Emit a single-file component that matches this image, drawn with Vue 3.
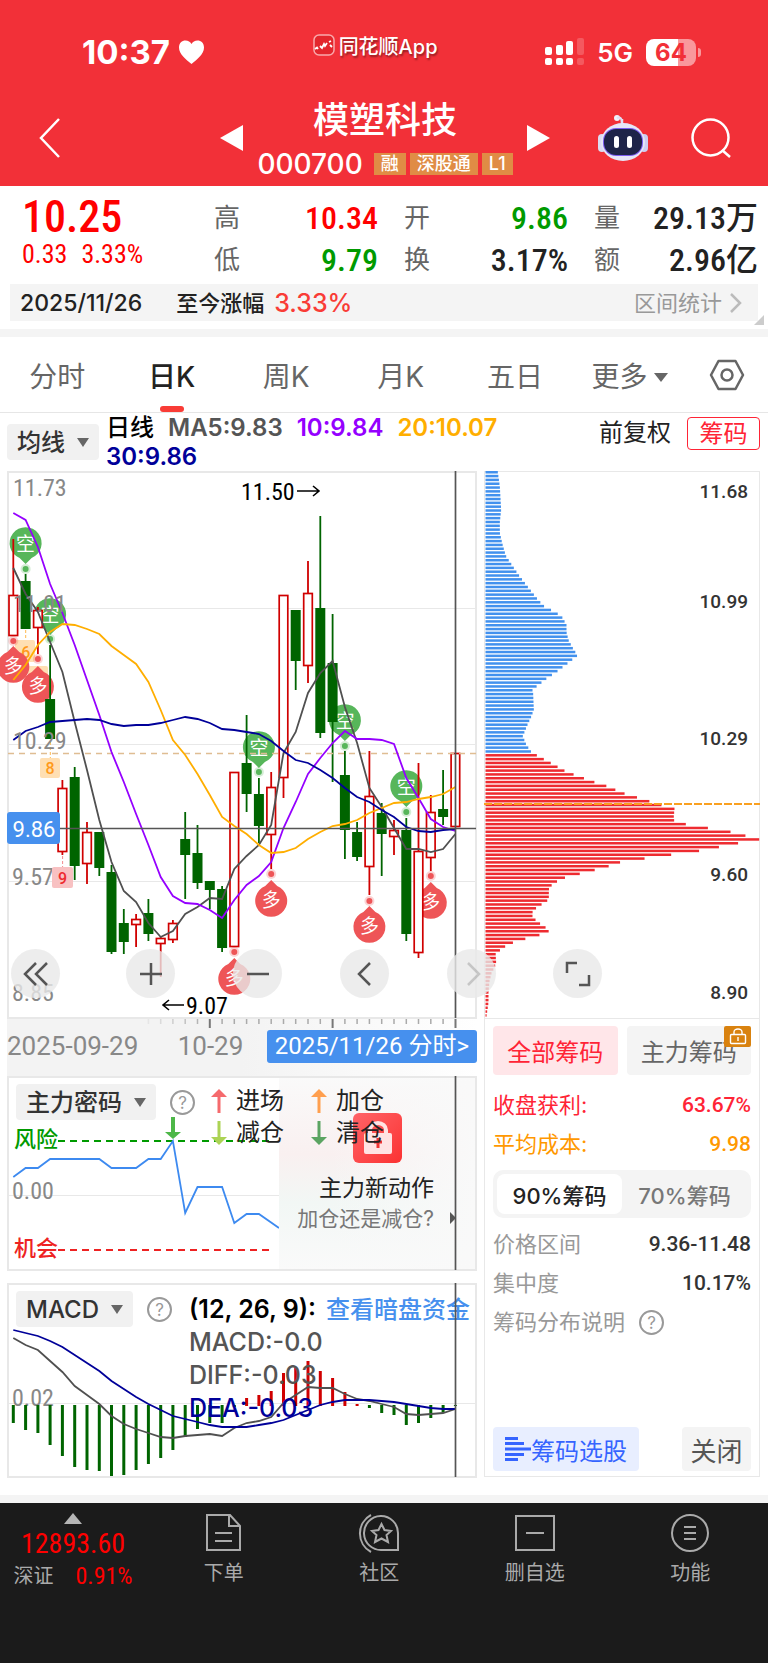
<template>
    <div class="page">
        <header class="header">
            <div class="status">
                <div class="status-time">
                    <span>10:37</span>
                    <svg width="27" height="26" viewBox="0 0 27 26"><path d="M13.500 25C8 20.500 1 15 1 8.500C1 4 4 1.500 7.500 1.500C10.200 1.500 12.300 3 13.500 5C14.700 3 16.800 1.500 19.500 1.500C23 1.500 26 4 26 8.500C26 15 19 20.500 13.500 25Z" fill="#fff" /></svg>
                </div>
                <div class="status-app">
                    <svg width="22" height="22" viewBox="0 0 22 22">
                        <rect x="1" y="1" width="20" height="20" rx="5" fill="#e3262d" stroke="#f9a9ac" stroke-width="1.500" />
                        <path d="M2 15l2-1.500 1 1.500M7 12l2 2 2-4 1 2 2-3M16 8l2-1M17 11l2 2" fill="none" stroke="#fff" stroke-width="1.800" />
                    </svg>
                    <span>同花顺App</span>
                </div>
                <div class="status-net">
                    <svg width="39" height="28" viewBox="0 0 39 28" fill="#fff">
                        <rect x="0" y="9" width="7" height="8" rx="2" />
                        <rect x="11" y="7" width="7" height="10" rx="2" />
                        <rect x="21" y="3" width="7" height="14" rx="2" />
                        <rect x="32" y="0" width="7" height="17" rx="2" opacity=".2" />
                        <rect x="0" y="20" width="7" height="7" rx="2" />
                        <rect x="11" y="20" width="7" height="7" rx="2" />
                        <rect x="21" y="20" width="7" height="7" rx="2" />
                        <rect x="32" y="20" width="7" height="7" rx="2" opacity=".2" />
                    </svg>
                    <span class="net-type">5G</span>
                    <span class="battery"><span>64</span></span>
                </div>
            </div>
            <div class="nav">
                <button type="button" class="icon-btn" aria-label="Back">
                    <svg width="22" height="40" viewBox="0 0 22 40"><path d="M20 1L2 20L20 39" fill="none" stroke="#fff" stroke-width="2.500" /></svg>
                </button>
                <div class="stock">
                    <button type="button" class="icon-btn" aria-label="Previous">
                        <svg width="24" height="26" viewBox="0 0 24 26"><path d="M0 13L23 0V26Z" fill="#fff" /></svg>
                    </button>
                    <div class="stock-title">
                        <h1>模塑科技</h1>
                        <div class="stock-code">
                            <span>000700</span>
                            <em v-for="tag in tags" :key="tag">{{ tag }}</em>
                        </div>
                    </div>
                    <button type="button" class="icon-btn" aria-label="Next">
                        <svg width="24" height="26" viewBox="0 0 24 26"><path d="M24 13L1 0V26Z" fill="#fff" /></svg>
                    </button>
                </div>
                <div class="nav-right">
                    <button type="button" class="icon-btn" aria-label="Assistant">
                        <svg width="50" height="46" viewBox="0 0 50 46">
                            <path d="M24 9V4" stroke="#dfe0f5" stroke-width="2.500" />
                            <circle cx="19" cy="3" r="3" fill="#f1f1fb" />
                            <path d="M19 3Q24 1 24 8" fill="none" stroke="#dfe0f5" stroke-width="2" />
                            <rect x="0" y="19" width="8" height="18" rx="4" fill="#dcdcf2" />
                            <rect x="42" y="19" width="8" height="18" rx="4" fill="#cdcdf0" />
                            <ellipse cx="25" cy="27" rx="22" ry="19" fill="#e6e6f7" />
                            <rect x="5" y="13" width="40" height="28" rx="13" fill="#7b5cf0" />
                            <rect x="6" y="14" width="38" height="26" rx="12" fill="#1e2448" />
                            <rect x="16" y="21" width="5" height="12" rx="2.500" fill="#fff" />
                            <rect x="29" y="21" width="5" height="12" rx="2.500" fill="#fff" />
                        </svg>
                    </button>
                    <button type="button" class="icon-btn" aria-label="Search">
                        <svg width="40" height="40" viewBox="0 0 40 40" fill="none" stroke="#fff" stroke-width="2.500">
                            <circle cx="19.500" cy="19.500" r="18" />
                            <path d="M31 32L39 39" />
                        </svg>
                    </button>
                </div>
            </div>
        </header>

        <section class="quote">
            <div class="price">
                <strong>10.25</strong>
                <p><span>0.33</span><span>3.33%</span></p>
            </div>
            <dl class="stats">
                <div v-for="item in stats" :key="item.label">
                    <dt>{{ item.label }}</dt>
                    <dd :class="item.tone">{{ item.value }}</dd>
                </div>
            </dl>
        </section>

        <div class="range">
            <span class="range-date">2025/11/26</span>
            <span class="range-label">至今涨幅</span>
            <b>3.33%</b>
            <a href="#" class="range-link">区间统计
                <svg width="12" height="20" viewBox="0 0 12 20"><path d="M1 1L10 10L1 19" fill="none" stroke="#bbb" stroke-width="2.500" /></svg>
            </a>
        </div>

        <nav class="tabs">
            <button
                v-for="tab in tabs"
                :key="tab"
                type="button"
                class="tab"
                :class="{ active: tab === activeTab, more: tab === '更多' }"
                @click="activeTab = tab"
            >{{ tab }}</button>
            <button type="button" class="tab-set" aria-label="Settings">
                <svg width="36" height="32" viewBox="0 0 36 32" fill="none" stroke="#666" stroke-width="2.500">
                    <path d="M9.500 2H26.500L34 16L26.500 30H9.500L2 16Z" stroke-linejoin="round" />
                    <circle cx="18" cy="16" r="5.500" />
                </svg>
            </button>
        </nav>

        <div class="ma-row">
            <label class="picker">
                <select aria-label="Indicator"><option>均线</option></select>
            </label>
            <div class="ma-list">
                <span v-for="ma in maLabels" :key="ma.text" :class="ma.name">{{ ma.text }}</span>
            </div>
            <span class="adjust">前复权</span>
            <button type="button" class="chip-toggle">筹码</button>
        </div>

        <main class="board">
            <div class="left">
                <div class="kline">
                    <svg viewBox="7 471 470 547" class="plot">
                        <rect x="8" y="472" width="468" height="546" class="frame" />
                        <path d="M8 608.500H476M8 744.500H476M8 881.500H476" class="grid-line" />
                        <!-- counting badges under the candles -->
                        <rect x="15" y="640" width="20" height="22" rx="2" class="badge-o" />
                        <path d="M25.700 630V640M50.300 742V758" stroke="#ffb84d" stroke-dasharray="3 2" />
                        <text x="25.700" y="658" class="badge-text orange">6</text>
                        <rect x="28" y="666" width="20" height="20" rx="2" class="badge-o" />
                        <rect x="40" y="758" width="20" height="20" rx="2" class="badge-o" />
                        <text x="50" y="774" class="badge-text orange">8</text>
                        <g v-for="(pin, i) in pins" :key="'pin' + i">
                            <circle :cx="xAt(pin.i)" :cy="pin.dot" r="5" :fill="pin.up ? '#ee5557' : '#57b65a'" opacity=".25" />
                            <circle :cx="xAt(pin.i)" :cy="pin.dot" r="3" :fill="pin.up ? '#ee5557' : '#57b65a'" />
                            <path :d="pinPath(pin)" :fill="pin.up ? '#ee5557' : '#57b65a'" />
                            <text :x="xAt(pin.i)" :y="pin.y + 7" class="pin-text">{{ pin.up ? '多' : '空' }}</text>
                        </g>
                        <g v-for="(c, i) in candles" :key="'c' + i">
                            <path :d="`M${xAt(i)} ${c[1]}V${c[2]}M${xAt(i)} ${c[3]}V${c[4]}`" :stroke="c[0] ? '#d00000' : '#006400'" stroke-width="1.800" />
                            <rect v-if="c[0]" :x="xAt(i) - 4.300" :y="c[2] + 0.500" width="8.600" :height="c[3] - c[2] - 1" fill="#fff" stroke="#d00000" stroke-width="1.700" />
                            <rect v-else :x="xAt(i) - 5" :y="c[2]" width="10" :height="c[3] - c[2]" fill="#006400" />
                        </g>
                        <path d="M8 753.500H476" stroke="#dfbd92" stroke-width="1.300" stroke-dasharray="6 5" />
                        <polyline :points="line(ma5)" class="curve c-gray" />
                        <polyline :points="line(ma10)" class="curve c-purple" />
                        <polyline :points="line(ma20)" class="curve c-orange" />
                        <polyline :points="line(ma30)" class="curve c-navy" />
                        <g class="axis-text">
                            <text x="13" y="496">11.73</text>
                            <text x="13" y="612">11.01</text>
                            <text x="13" y="749">10.29</text>
                            <text x="12" y="885">9.57</text>
                            <text x="12" y="1001">8.85</text>
                        </g>
                        <rect x="52" y="867" width="21" height="21" rx="2" fill="#f8c1c2" />
                        <path d="M62.600 856V867" stroke="#f28b8d" stroke-dasharray="3 2" />
                        <text x="62.500" y="884" class="badge-text red">9</text>
                        <g class="note">
                            <text x="241" y="500">11.50</text>
                            <text x="186" y="1014">9.07</text>
                            <path d="M297 491H319M313 486L319 491L313 496M184 1005H163M169 1000L163 1005L169 1010" />
                        </g>
                        <path d="M8 828.500H476M455.500 471V1018" class="cross" />
                        <rect x="7" y="812" width="53" height="32" rx="3" fill="#4690ee" />
                        <text x="34" y="837" class="now">9.86</text>
                    </svg>
                    <div class="tools">
                        <button v-for="tool in tools" :key="tool.name" type="button" class="tool" :aria-label="tool.name">
                            <svg width="26" height="26" viewBox="0 0 26 26" :class="{ faded: tool.name === 'Forward' }"><path :d="tool.path" /></svg>
                        </button>
                    </div>
                </div>

                <div class="dates">
                    <svg viewBox="7 1018 470 10" class="plot ticks">
                        <path v-for="n in 25" :key="n" :d="`M${xAt(n + 10)} 1018v${n === 6 || n === 16 ? 10 : 6}`" :opacity="Math.min(1, n / 6)" :class="{ major: n === 6 || n === 16 }" />
                        <path d="M455.500 1018v10" class="major" />
                    </svg>
                    <div class="date-row">
                        <span>2025-09-29</span>
                        <span>10-29</span>
                        <button type="button" class="date-btn">2025/11/26 分时&gt;</button>
                    </div>
                </div>

                <section class="panel">
                    <svg viewBox="7 1076 470 194" class="plot">
                        <defs>
                            <linearGradient id="veil" x1="0" y1="0" x2="0" y2="1">
                                <stop offset="0" stop-color="#fafafa" />
                                <stop offset=".4" stop-color="#f9f0f0" />
                                <stop offset=".65" stop-color="#f2f7f5" />
                                <stop offset="1" stop-color="#fafafa" />
                            </linearGradient>
                            <linearGradient id="veil-side" x1="0" y1="0" x2="1" y2="0">
                                <stop offset="0" stop-color="#f9f9f9" stop-opacity="0" />
                                <stop offset="1" stop-color="#f9f9f9" />
                            </linearGradient>
                            <linearGradient id="lock-bg" x1="0" y1="0" x2="1" y2="1">
                                <stop offset="0" stop-color="#ff6468" />
                                <stop offset="1" stop-color="#fb3232" />
                            </linearGradient>
                        </defs>
                        <path d="M8 1195.500H279" class="grid-line" />
                        <path d="M58 1141H273" stroke="#009a00" stroke-width="2" stroke-dasharray="7 5" />
                        <path d="M58 1250H273" stroke="#ee2222" stroke-width="2" stroke-dasharray="7 5" />
                        <text x="14" y="1147" class="mark green">风险</text>
                        <text x="14" y="1256" class="mark red">机会</text>
                        <text x="12" y="1199" class="axis-text">0.00</text>
                        <polyline :points="line(force) + ' 279,1228'" class="curve" stroke="#3d8af0" />
                        <path d="M173 1117V1134" stroke="#4db748" stroke-width="4" />
                        <path d="M165 1132H181L173 1139Z" fill="#4db748" />
                        <rect x="279" y="1077" width="197" height="193" fill="url(#veil)" />
                        <rect x="330" y="1077" width="146" height="193" fill="url(#veil-side)" />
                        <rect x="353" y="1113" width="49" height="50" rx="6" fill="url(#lock-bg)" />
                        <rect x="364" y="1133" width="28" height="21" rx="2" fill="#ffe3e3" />
                        <path d="M370 1133V1130A8 7 0 0 1 386 1130V1133" fill="none" stroke="#ffe3e3" stroke-width="4" />
                        <path d="M378 1138V1148M374 1142H382" stroke="#e33" stroke-width="3" />
                        <path d="M450 1212L456 1218L450 1224Z" fill="#555" />
                        <rect x="8" y="1077" width="468" height="193" class="frame" />
                        <path d="M455.500 1076V1270" class="cross" />
                    </svg>
                    <div class="panel-head">
                        <label class="picker"><select aria-label="Sub chart"><option>主力密码</option></select></label>
                        <button type="button" class="help">?</button>
                        <ul class="legend">
                            <li v-for="item in legend" :key="item.text">
                                <svg width="16" height="24" viewBox="0 0 16 24" :fill="item.color">
                                    <path v-if="item.up" d="M8 0L16 8H9.500V24H6.500V8H0Z" />
                                    <path v-else d="M8 24L16 16H9.500V0H6.500V16H0Z" />
                                </svg>
                                {{ item.text }}
                            </li>
                        </ul>
                    </div>
                    <a href="#" class="promo">
                        <b>主力新动作</b>
                        <span>加仓还是减仓?</span>
                    </a>
                </section>

                <section class="panel macd">
                    <svg viewBox="7 1283 470 194" class="plot">
                        <path d="M8 1403.500H476" class="grid-line" />
                        <text x="12" y="1406" class="axis-text">0.02</text>
                        <path v-for="(y, i) in macdBars" :key="i" :d="`M${xAt(i)} ${y < 1405 ? 1406 : 1405}V${y}`" :stroke="y < 1405 ? '#d00000' : '#006400'" stroke-width="3" />
                        <polyline :points="line(diff)" class="curve c-gray" />
                        <polyline :points="line(dea)" class="curve c-navy" />
                        <rect x="8" y="1284" width="468" height="193" class="frame" />
                    </svg>
                    <div class="panel-head">
                        <label class="picker"><select aria-label="Sub chart"><option>MACD</option></select></label>
                        <button type="button" class="help">?</button>
                        <div class="macd-values">
                            <p><b>(12, 26, 9):</b><a href="#">查看暗盘资金</a></p>
                            <p>MACD:-0.0</p>
                            <p>DIFF:-0.03</p>
                            <p class="navy">DEA:-0.03</p>
                        </div>
                    </div>
                    <svg viewBox="7 1283 470 194" class="plot over"><path d="M455.500 1283V1477" class="cross" /></svg>
                </section>
            </div>

            <aside class="right">
                <div class="profile">
                    <svg viewBox="484 471 276 547" class="plot">
                        <rect x="484.500" y="471.500" width="275" height="547" class="frame thin" />
                        <rect v-for="(bar, i) in chipBars" :key="i" x="485.500" :y="bar.y" :width="bar.width" height="2.500" :fill="bar.y < 753 ? '#4291ee' : '#ee2b30'" />
                        <path d="M484 804H760" stroke="#f9a021" stroke-width="2" stroke-dasharray="8 2" />
                        <g class="chip-text">
                            <text x="748" y="498">11.68</text>
                            <text x="748" y="608">10.99</text>
                            <text x="748" y="745">10.29</text>
                            <text x="748" y="881">9.60</text>
                            <text x="748" y="999">8.90</text>
                        </g>
                    </svg>
                </div>
                <div class="chip-info">
                    <div class="chip-tabs">
                        <button type="button" class="on">全部筹码</button>
                        <button type="button">主力筹码
                            <svg class="lock" width="27" height="21" viewBox="0 0 27 21">
                                <rect width="27" height="21" rx="2" fill="#d9820f" />
                                <g fill="none" stroke="#fff" stroke-width="1.400"><rect x="6.500" y="8.500" width="15" height="9" rx="1" /><path d="M10 8V6A4 3 0 0 1 18 6V8M14 11V15" /></g>
                            </svg>
                        </button>
                    </div>
                    <p class="row red"><span>收盘获利:</span><b>63.67%</b></p>
                    <p class="row amber"><span>平均成本:</span><b>9.98</b></p>
                    <div class="segment">
                        <button v-for="p in ['90%', '70%']" :key="p" type="button" :class="{ on: p === percent }" @click="percent = p">{{ p }}筹码</button>
                    </div>
                    <p class="row gray"><span>价格区间</span><b>9.36-11.48</b></p>
                    <p class="row gray"><span>集中度</span><b>10.17%</b></p>
                    <p class="row gray explain"><span>筹码分布说明</span><button type="button" class="help">?</button></p>
                    <div class="chip-actions">
                        <button type="button" class="pick">
                            <svg width="26" height="24" viewBox="0 0 26 24"><path d="M0 1.500H13M0 6.500H19M0 12H26M0 17.500H19M0 22.500H13" stroke="#3564ff" stroke-width="3" /></svg>筹码选股
                        </button>
                        <button type="button" class="close">关闭</button>
                    </div>
                </div>
                <button type="button" class="tool expand" aria-label="Full screen">
                    <svg width="26" height="26" viewBox="0 0 26 26"><path d="M2 12V2H12M24 14V24H14" /></svg>
                </button>
            </aside>
        </main>

        <footer class="footer">
            <div class="index">
                <svg width="18" height="11" viewBox="0 0 18 11"><path d="M9 0L18 11H0Z" fill="#b5b5b5" /></svg>
                <strong>12893.60</strong>
                <p><span>深证</span><b>0.91%</b></p>
            </div>
            <a v-for="item in menu" :key="item.text" href="#" class="menu-item">
                <svg width="42" height="40" viewBox="0 0 42 40"><path :d="item.path" /></svg>
                <span>{{ item.text }}</span>
            </a>
        </footer>
    </div>
</template>

<script setup>
import { ref } from 'vue';

    const activeTab = ref('日K')
    const percent = ref('90%')

    const tags = ['融', '深股通', 'L1']
    const tabs = ['分时', '日K', '周K', '月K', '五日', '更多']

    const stats = [
        { label: '高', value: '10.34', tone: 'up' },
        { label: '开', value: '9.86', tone: 'down' },
        { label: '量', value: '29.13万' },
        { label: '低', value: '9.79', tone: 'down' },
        { label: '换', value: '3.17%' },
        { label: '额', value: '2.96亿' }
    ]

    const maLabels = [
        { text: '日线', name: 'black' },
        { text: 'MA5:9.83', name: 'dim' },
        { text: '10:9.84', name: 'purple' },
        { text: '20:10.07', name: 'orange' },
        { text: '30:9.86', name: 'navy' }
    ]

    // [rising, high, body top, body bottom, low]
    const candles = [
        [1, 539, 595, 636, 636], [0, 574, 581, 629, 629], [1, 607, 610, 628, 654], [0, 645, 699, 739, 739],
        [1, 780, 788, 852, 855], [0, 767, 777, 866, 880], [1, 822, 832, 864, 884], [0, 832, 832, 868, 876],
        [0, 865, 872, 952, 954], [0, 909, 923, 942, 954], [1, 914, 919, 925, 947], [0, 899, 913, 934, 941],
        [1, 937, 938, 944, 977], [1, 920, 923, 940, 943], [0, 812, 839, 855, 899], [0, 825, 853, 883, 889],
        [0, 881, 881, 890, 909], [0, 886, 889, 948, 952], [1, 772, 772, 947, 947], [0, 715, 763, 794, 812],
        [0, 778, 794, 826, 843], [1, 772, 787, 835, 869], [1, 595, 595, 778, 798], [0, 610, 610, 661, 690],
        [1, 561, 593, 666, 683], [0, 516, 608, 733, 738], [0, 614, 663, 722, 782], [0, 751, 775, 830, 859],
        [0, 822, 832, 857, 861], [1, 751, 796, 867, 895], [0, 803, 813, 834, 876], [1, 820, 830, 837, 855],
        [0, 818, 830, 934, 941], [1, 763, 851, 953, 958], [1, 795, 812, 858, 871], [0, 770, 809, 817, 825],
        [1, 753, 753, 827, 827]
    ]
    const ma5 = [568, 594, 612, 642, 672, 722, 770, 820, 862, 891, 902, 923, 937, 931, 914, 907, 898, 899, 869, 856, 845, 825, 753, 732, 693, 673, 661, 707, 743, 788, 807, 828, 849, 849, 852, 849, 834]
    const ma10 = [513, 520, 547, 584, 613, 645, 680, 715, 752, 782, 814, 845, 877, 896, 903, 904, 910, 918, 900, 885, 876, 862, 828, 802, 774, 758, 743, 731, 739, 739, 740, 744, 778, 798, 819, 827, 831]
    const ma20 = [680, 665, 645, 632, 624, 625, 629, 634, 646, 655, 664, 682, 710, 740, 755, 774, 795, 817, 826, 834, 845, 853, 852, 848, 839, 832, 826, 824, 820, 813, 808, 803, 802, 799, 797, 794, 787]
    const ma30 = [740, 731, 727, 722, 721, 720, 719, 720, 724, 726, 725, 725, 723, 720, 717, 719, 723, 729, 730, 732, 734, 741, 751, 760, 763, 770, 778, 788, 797, 802, 810, 817, 827, 831, 832, 830, 829]
    const force = [1177, 1168, 1168, 1159, 1159, 1159, 1159, 1159, 1168, 1168, 1168, 1159, 1159, 1141, 1213, 1187, 1187, 1187, 1223, 1214, 1214]
    const macdBars = [1423, 1430, 1433, 1445, 1456, 1467, 1470, 1471, 1476, 1475, 1470, 1464, 1458, 1450, 1437, 1429, 1423, 1423, 1407, 1398, 1395, 1391, 1373, 1368, 1361, 1371, 1378, 1392, 1404, 1408, 1413, 1415, 1425, 1423, 1418, 1412, 1406]
    const diff = [1338, 1345, 1350, 1361, 1372, 1386, 1395, 1404, 1416, 1424, 1429, 1433, 1437, 1438, 1436, 1435, 1434, 1436, 1428, 1423, 1421, 1417, 1403, 1395, 1387, 1388, 1388, 1394, 1399, 1401, 1404, 1407, 1414, 1415, 1414, 1413, 1409]
    const dea = [1330, 1333, 1336, 1341, 1347, 1355, 1363, 1371, 1381, 1389, 1397, 1404, 1410, 1416, 1419, 1422, 1425, 1427, 1427, 1427, 1425, 1423, 1420, 1415, 1410, 1405, 1402, 1400, 1400, 1400, 1401, 1402, 1404, 1406, 1408, 1409, 1409]

    const pins = [
        { i: 1, y: 544, dot: 569 }, { i: 3, y: 615, dot: 639 }, { i: 20, y: 748, dot: 772 },
        { i: 27, y: 721, dot: 746 }, { i: 32, y: 787, dot: 812 },
        { i: 0, y: 666, dot: 641, up: true }, { i: 2, y: 686, dot: 659, up: true }, { i: 18, y: 978, dot: 952, up: true },
        { i: 21, y: 900, dot: 874, up: true }, { i: 29, y: 926, dot: 901, up: true }, { i: 34, y: 902, dot: 876, up: true }
    ]

    const tools = [
        { name: 'Rewind', path: 'M13 2L2 13L13 24M24 2L13 13L24 24' },
        { name: 'Zoom in', path: 'M13 2V24M2 13H24' },
        { name: 'Zoom out', path: 'M2 13H24' },
        { name: 'Back one', path: 'M18 2L7 13L18 24' },
        { name: 'Forward', path: 'M9 2L20 13L9 24' }
    ]

    const legend = [
        { text: '进场', color: '#f56a6d', up: true },
        { text: '加仓', color: '#ff9f4f', up: true },
        { text: '减仓', color: '#acd355' },
        { text: '清仓', color: '#5ba462' }
    ]

    const menu = [
        { text: '下单', path: 'M4 2H27L37 13V37H4ZM26 2V13H37M12 20H29M12 28H29' },
        { text: '社区', path: 'M40 37H24A17 17 0 1 1 40 20ZM13 2A21 21 0 0 0 13 39M23.500 11L26.500 17L33 18L28.500 22L30 29L23.500 25.500L17 29L18.500 22L14 18L20.500 17Z' },
        { text: '删自选', path: 'M2 3H40V37H2ZM12 20H30' },
        { text: '功能', path: 'M21 2A18 18 0 1 0 21 38A18 18 0 1 0 21 2M15 14H27M15 20H27M15 26H27' }
    ]

    // key points of the chip profile: [offset down, length]
    const profile = [
        [0, 37], [40, 43], [105, 47], [140, 43], [170, 43], [202, 51], [234, 61], [265, 83], [287, 99], [320, 126],
        [352, 153], [374, 174], [395, 215], [406, 230], [427, 243], [448, 243], [470, 249], [491, 261], [513, 276],
        [534, 248], [557, 216], [578, 183], [600, 153], [610, 141], [621, 143], [665, 145], [685, 137], [707, 126],
        [739, 112], [760, 121], [781, 135], [792, 153], [813, 194], [835, 236], [846, 264], [867, 325], [878, 362],
        [899, 415], [920, 488], [931, 525], [942, 567], [974, 564], [985, 599], [996, 667], [1006, 732], [1017, 778],
        [1028, 822], [1039, 757], [1050, 698], [1060, 643], [1071, 557], [1082, 475], [1092, 405], [1103, 370],
        [1114, 327], [1135, 239], [1145, 216], [1157, 198], [1168, 190], [1190, 190], [1200, 185], [1211, 167],
        [1222, 150], [1232, 141], [1243, 141], [1253, 150], [1264, 164], [1275, 181], [1285, 190], [1297, 159],
        [1307, 118], [1318, 80], [1329, 57], [1339, 43], [1350, 30], [1370, 32], [1382, 29], [1403, 18], [1425, 12],
        [1455, 9], [1485, 9], [1523, 3], [1540, 2]
    ]
    const chipBars = []
    for (let n = 0; n < 143; n++) {
        const at = n * 10.71
        const k = profile.findIndex((p, i) => i > 0 && p[0] >= at)
        const [y0, w0] = profile[k - 1]
        const [y1, w1] = profile[k]
        const width = w0 + (w1 - w0) * (at - y0) / (y1 - y0)
        chipBars.push({ y: 471 + at / 2.8, width: width / 3 })
    }

    const xAt = (i) => Math.round((13.3 + i * 12.28) * 10) / 10
    const line = (values) => values.map((y, i) => `${xAt(i)},${y}`).join(' ')
    const pinPath = (pin) => {
        const x = xAt(pin.i)
        return pin.up
            ? `M${x} ${pin.y - 20}L${x + 6} ${pin.y - 14}A16 16 0 1 1 ${x - 6} ${pin.y - 14}Z`
            : `M${x} ${pin.y + 20}L${x - 6} ${pin.y + 14}A16 16 0 1 1 ${x + 6} ${pin.y + 14}Z`
    }
</script>

<style>
body {
  background: #fff;
}
</style>

<style scoped>
.page {
  display: flex;
  flex-direction: column;
  min-height: 100vh;
  font-family: Inter, "Noto Sans CJK SC", sans-serif;
  color: #222;
}

.page * {
  box-sizing: border-box;
}

button,
select {
  margin: 0;
  padding: 0;
  border: none;
  background: none;
  font: inherit;
  color: inherit;
  cursor: pointer;
}

a {
  color: inherit;
  text-decoration: none;
}

p,
h1,
dl,
dd,
ul {
  margin: 0;
  padding: 0;
}

svg {
  display: block;
}

.header {
  background: #f23038;
  color: #fff;
  padding-bottom: 6px;
}

.status {
  display: flex;
  align-items: center;
  justify-content: space-between;
  height: 96px;
  padding: 8px 66px 0 82px;
}

.status-time {
  display: flex;
  align-items: center;
  gap: 8px;
  font-size: 33px;
  font-weight: 700;
}

.status-app {
  display: flex;
  align-items: center;
  gap: 4px;
  margin-bottom: 14px;
  font-size: 20px;
  font-weight: 500;
  text-shadow: 1px 2px 2px rgba(0, 0, 0, 0.4);
}

.status-net {
  display: flex;
  align-items: center;
  gap: 13px;
}

.net-type {
  font-size: 26px;
  font-weight: 600;
}

.battery {
  position: relative;
  width: 50px;
  height: 27px;
  margin-right: 6px;
  border-radius: 8px;
  background: linear-gradient(90deg, #fff 64%, #f9989c 64%);
  color: #f23038;
  font-size: 24px;
  font-weight: 700;
  line-height: 27px;
  text-align: center;
}

.battery::after {
  content: "";
  position: absolute;
  right: -5px;
  top: 9px;
  width: 3px;
  height: 9px;
  border-radius: 0 4px 4px 0;
  background: #f9989c;
}

.nav {
  display: grid;
  grid-template-columns: 1fr auto 1fr;
  align-items: center;
  height: 84px;
  padding: 0 37px 0 39px;
}

.stock {
  display: flex;
  align-items: center;
  gap: 13px;
}

.stock-title {
  text-align: center;
}

.stock-title h1 {
  font-size: 36px;
  font-weight: 500;
  line-height: 44px;
}

.stock-code {
  display: flex;
  align-items: center;
  gap: 4px;
  margin-top: 8px;
  font-size: 28px;
  font-weight: 500;
  line-height: 28px;
}

.stock-code span {
  margin-right: 7px;
}

.stock-code em {
  padding: 0 7px;
  background: #e08c45;
  font-size: 18px;
  font-style: normal;
  line-height: 22px;
}

.nav-right {
  display: flex;
  align-items: center;
  justify-content: flex-end;
  gap: 43px;
}

.quote {
  display: flex;
  padding: 0 10px 0 22px;
  font-family: "Roboto Condensed", "Liberation Sans Narrow", Roboto, "Noto Sans CJK SC", sans-serif;
}

.price {
  width: 192px;
  padding-top: 8px;
  color: #f00;
}

.price strong {
  display: block;
  font-size: 44px;
  font-weight: 500;
  line-height: 46px;
}

.price p {
  display: flex;
  gap: 14px;
  font-size: 26px;
  line-height: 28px;
}

.stats {
  flex: 1;
  display: grid;
  grid-template-columns: repeat(3, 1fr);
  column-gap: 26px;
  padding: 11px 0 3px;
}

.stats div {
  display: flex;
  justify-content: space-between;
  line-height: 42px;
}

.stats dt {
  color: #666;
  font-size: 26px;
}

.stats dd {
  font-size: 32px;
  font-weight: 500;
}

.up {
  color: #f00;
}

.down {
  color: #009a00;
}

.range {
  position: relative;
  display: flex;
  align-items: center;
  height: 37px;
  margin: 0 10px 8px;
  padding: 0 16px 0 10px;
  background: #f4f4f4;
  font-size: 22px;
  font-weight: 500;
  line-height: 30px;
}

.range::after {
  content: "";
  position: absolute;
  right: -6px;
  bottom: -4px;
  border-left: 10px solid transparent;
  border-bottom: 10px solid #ccc;
}

.range-date {
  font-size: 23px;
}

.range-label {
  margin: 0 10px 0 34px;
}

.range b {
  color: #f93c36;
  font-size: 25px;
  font-weight: 500;
}

.range-link {
  display: flex;
  align-items: center;
  gap: 8px;
  margin-left: auto;
  color: #999;
  font-weight: 400;
}

.tabs {
  display: flex;
  border-top: 8px solid #f4f4f4;
  border-bottom: 1px solid #e6e6e6;
}

.tab {
  position: relative;
  flex: 114;
  height: 75px;
  color: #666;
  font-size: 28px;
}

.tab.active {
  color: #222;
  font-weight: 500;
}

.tab.active::after {
  content: "";
  position: absolute;
  left: 50%;
  bottom: 0;
  width: 24px;
  height: 6px;
  margin-left: -12px;
  border-radius: 3px;
  background: #f93c36;
}

.tab.more::after {
  content: "";
  display: inline-block;
  margin: 0 0 5px 6px;
  border: 7px solid transparent;
  border-top: 9px solid #666;
  border-bottom: none;
}

.tab-set {
  flex: 81;
  display: flex;
  align-items: center;
  justify-content: center;
}

.picker {
  position: relative;
  flex: none;
}

.picker select {
  appearance: none;
  height: 36px;
  padding: 0 34px 0 10px;
  border-radius: 4px;
  background: #f1f1f1;
  color: #333;
  font-size: 24px;
  font-weight: 500;
}

.picker::after {
  content: "";
  position: absolute;
  right: 10px;
  top: 14px;
  border: 6px solid transparent;
  border-top: 9px solid #666;
  border-bottom: none;
  pointer-events: none;
}

.ma-row {
  display: flex;
  align-items: flex-start;
  min-height: 58px;
  padding: 0 8px 0 7px;
  font-size: 24px;
}

.ma-row .picker {
  margin: 11px 7px 0 0;
}

.ma-list {
  flex: 1;
  display: flex;
  flex-wrap: wrap;
  column-gap: 14px;
  margin-right: 14px;
  font-weight: 600;
  line-height: 29px;
}

.black {
  color: #000;
  font-weight: 500;
}

.dim {
  color: #555;
}

.purple {
  color: #9500ff;
}

.orange {
  color: #ffae00;
}

.navy {
  color: #000099;
}

.adjust {
  line-height: 40px;
}

.chip-toggle {
  width: 73px;
  height: 33px;
  margin: 4px 0 0 16px;
  border: 1px solid #ff2436;
  border-radius: 4px;
  color: #ff2436;
  line-height: 30px;
}

.board {
  display: grid;
  grid-template-columns: 470fr 276fr;
  gap: 7px;
  padding: 0 8px 18px 7px;
}

.plot {
  width: 100%;
  height: auto;
  overflow: visible;
}

.frame {
  fill: none;
  stroke: #e8e8e8;
  stroke-width: 2;
}

.frame.thin {
  stroke-width: 1;
}

.grid-line {
  stroke: #e8e8e8;
}

.curve {
  fill: none;
  stroke-width: 1.8;
}

.c-gray {
  stroke: #505050;
}

.c-purple {
  stroke: #9500ff;
}

.c-orange {
  stroke: #ffae00;
}

.c-navy {
  stroke: #000099;
}

.cross {
  stroke: #555;
  stroke-width: 1.7;
}

.axis-text {
  fill: #888;
  font-family: "Roboto Condensed", "Liberation Sans Narrow", Roboto, sans-serif;
  font-size: 24px;
}

.note {
  fill: #000;
  font-family: "Roboto Condensed", "Liberation Sans Narrow", Roboto, sans-serif;
  font-size: 24px;
}

.note path {
  fill: none;
  stroke: #000;
  stroke-width: 1.6;
}

.now {
  fill: #fff;
  font-family: Roboto, sans-serif;
  font-size: 22px;
  text-anchor: middle;
}

.pin-text {
  fill: #fff;
  font-size: 19px;
  text-anchor: middle;
}

.badge-o {
  fill: #ffdfb3;
}

.badge-text {
  font-family: Roboto, sans-serif;
  font-size: 16px;
  font-weight: 500;
  text-anchor: middle;
}

.badge-text.orange {
  fill: #ff9a1a;
}

.badge-text.red {
  fill: #ee2b30;
}

.kline {
  position: relative;
}

.tools {
  position: absolute;
  left: 4px;
  bottom: 20px;
  z-index: 1;
  display: flex;
  gap: 58px;
}

.tool {
  display: flex;
  align-items: center;
  justify-content: center;
  width: 49px;
  height: 49px;
  border-radius: 50%;
  background: rgba(232, 232, 232, 0.8);
}

.tools .tool:first-child {
  margin-right: 8px;
}

.tool path {
  fill: none;
  stroke: #555;
  stroke-width: 2.5;
}

.faded {
  opacity: 0.25;
}

.dates {
  height: 58px;
  background: linear-gradient(90deg, #f3f3f3 50%, #fff);
}

.ticks {
  stroke: #aaa;
  stroke-width: 1.5;
}

.ticks .major {
  stroke: #777;
  stroke-width: 2;
}

.date-row {
  display: flex;
  align-items: center;
  justify-content: space-between;
  height: 36px;
  color: #888;
  font-family: Roboto, "Noto Sans CJK SC", sans-serif;
  font-size: 26px;
}

.date-row span:first-child {
  margin-right: 16px;
}

.date-btn {
  height: 33px;
  padding: 0 8px;
  border-radius: 3px;
  background: #4690ee;
  color: #fff;
  font-size: 24px;
  line-height: 33px;
}

.panel {
  position: relative;
}

.macd {
  margin-top: 13px;
}

.panel-head {
  position: absolute;
  left: 9px;
  top: 8px;
  display: flex;
  align-items: flex-start;
}

.help {
  width: 25px;
  height: 25px;
  border: 2px solid #999;
  border-radius: 50%;
  color: #999;
  font-size: 17px;
  line-height: 20px;
  text-align: center;
}

.panel-head .help {
  margin: 6px 0 0 14px;
}

.legend {
  display: grid;
  grid-template-columns: 100px 80px;
  margin: 1px 0 0 16px;
  list-style: none;
  font-size: 24px;
  line-height: 32px;
}

.legend li {
  display: flex;
  align-items: center;
  gap: 9px;
}

.mark {
  font-size: 22px;
  font-weight: 500;
}

.mark.green {
  fill: #009a00;
}

.mark.red {
  fill: #ee2222;
}

.promo {
  position: absolute;
  right: 43px;
  bottom: 38px;
  display: flex;
  flex-direction: column;
  align-items: flex-end;
  color: #777;
  font-size: 21px;
  line-height: 26px;
}

.promo b {
  color: #222;
  font-size: 23px;
  font-weight: 400;
  line-height: 36px;
}

.macd-values {
  margin-left: 17px;
  color: #555;
  font-size: 25px;
  font-weight: 500;
  line-height: 33px;
  white-space: nowrap;
}

.macd-values p:first-child {
  display: flex;
  gap: 10px;
  margin-top: 2px;
}

.macd-values b {
  color: #000;
  font-weight: 600;
}

.macd-values a {
  color: #4690ee;
  font-size: 24px;
}

.macd-values .navy {
  color: #000099;
}

.plot.over {
  position: absolute;
  left: 0;
  top: 0;
  pointer-events: none;
}

.right {
  position: relative;
  display: flex;
  flex-direction: column;
}

.expand {
  position: absolute;
  left: 69px;
  top: 478px;
}

.chip-text {
  fill: #333;
  font-family: Roboto, sans-serif;
  font-size: 19px;
  font-weight: 500;
  text-anchor: end;
}

.chip-info {
  flex: 1;
  display: flex;
  flex-direction: column;
  padding: 8px 8px 5px;
  border: 1px solid #e8e8e8;
  border-top: none;
  font-size: 22px;
}

.chip-tabs {
  display: grid;
  grid-template-columns: 1fr 1fr;
  gap: 9px;
  margin-bottom: 11px;
}

.chip-tabs button {
  position: relative;
  height: 49px;
  border-radius: 4px;
  background: #f4f4f4;
  color: #666;
  font-size: 24px;
}

.chip-tabs .on {
  background: #ffe6e9;
  color: #ff2436;
}

.lock {
  position: absolute;
  right: 0;
  top: 0;
}

.row {
  display: flex;
  align-items: center;
  justify-content: space-between;
  line-height: 39px;
}

.row b {
  color: #333;
  font-family: Roboto, sans-serif;
  font-size: 21px;
  font-weight: 500;
}

.row.gray {
  color: #999;
}

.row.red,
.row.red b {
  color: #ff2436;
}

.row.amber,
.row.amber b {
  color: #ff9800;
}

.row.explain {
  justify-content: flex-start;
  gap: 14px;
}

.segment {
  display: grid;
  grid-template-columns: 1fr 1fr;
  margin: 6px 0 7px;
  padding: 4px;
  border-radius: 10px;
  background: #f4f4f4;
  font-weight: 500;
}

.segment button {
  height: 40px;
  border-radius: 8px;
  color: #777;
}

.segment .on {
  background: #fff;
  color: #222;
}

.chip-actions {
  display: flex;
  justify-content: space-between;
  margin-top: auto;
}

.chip-actions button {
  height: 44px;
  border-radius: 4px;
}

.pick {
  display: flex;
  align-items: center;
  padding: 0 12px;
  background: #e8eeff;
  color: #3564ff;
  font-size: 24px;
}

.close {
  width: 69px;
  background: #f4f4f4;
  color: #555;
  font-size: 26px;
}

.footer {
  flex: 1;
  display: flex;
  align-items: flex-start;
  border-top: 8px solid #f4f4f4;
  background: #1b1b1b;
  color: #aaa;
  font-size: 20px;
}

.index {
  display: flex;
  flex-direction: column;
  align-items: center;
  width: 146px;
  padding-top: 10px;
  font-family: "Roboto Condensed", "Liberation Sans Narrow", Roboto, "Noto Sans CJK SC", sans-serif;
}

.index strong {
  margin-top: 4px;
  color: #f00;
  font-size: 28px;
  font-weight: 400;
  line-height: 32px;
}

.index p {
  display: flex;
  gap: 22px;
  line-height: 32px;
}

.index b {
  color: #f00;
  font-size: 24px;
  font-weight: 400;
}

.menu-item {
  flex: 1;
  display: flex;
  flex-direction: column;
  align-items: center;
  padding-top: 10px;
  line-height: 40px;
}

.menu-item path {
  fill: none;
  stroke: #aaa;
  stroke-width: 2;
}
</style>
